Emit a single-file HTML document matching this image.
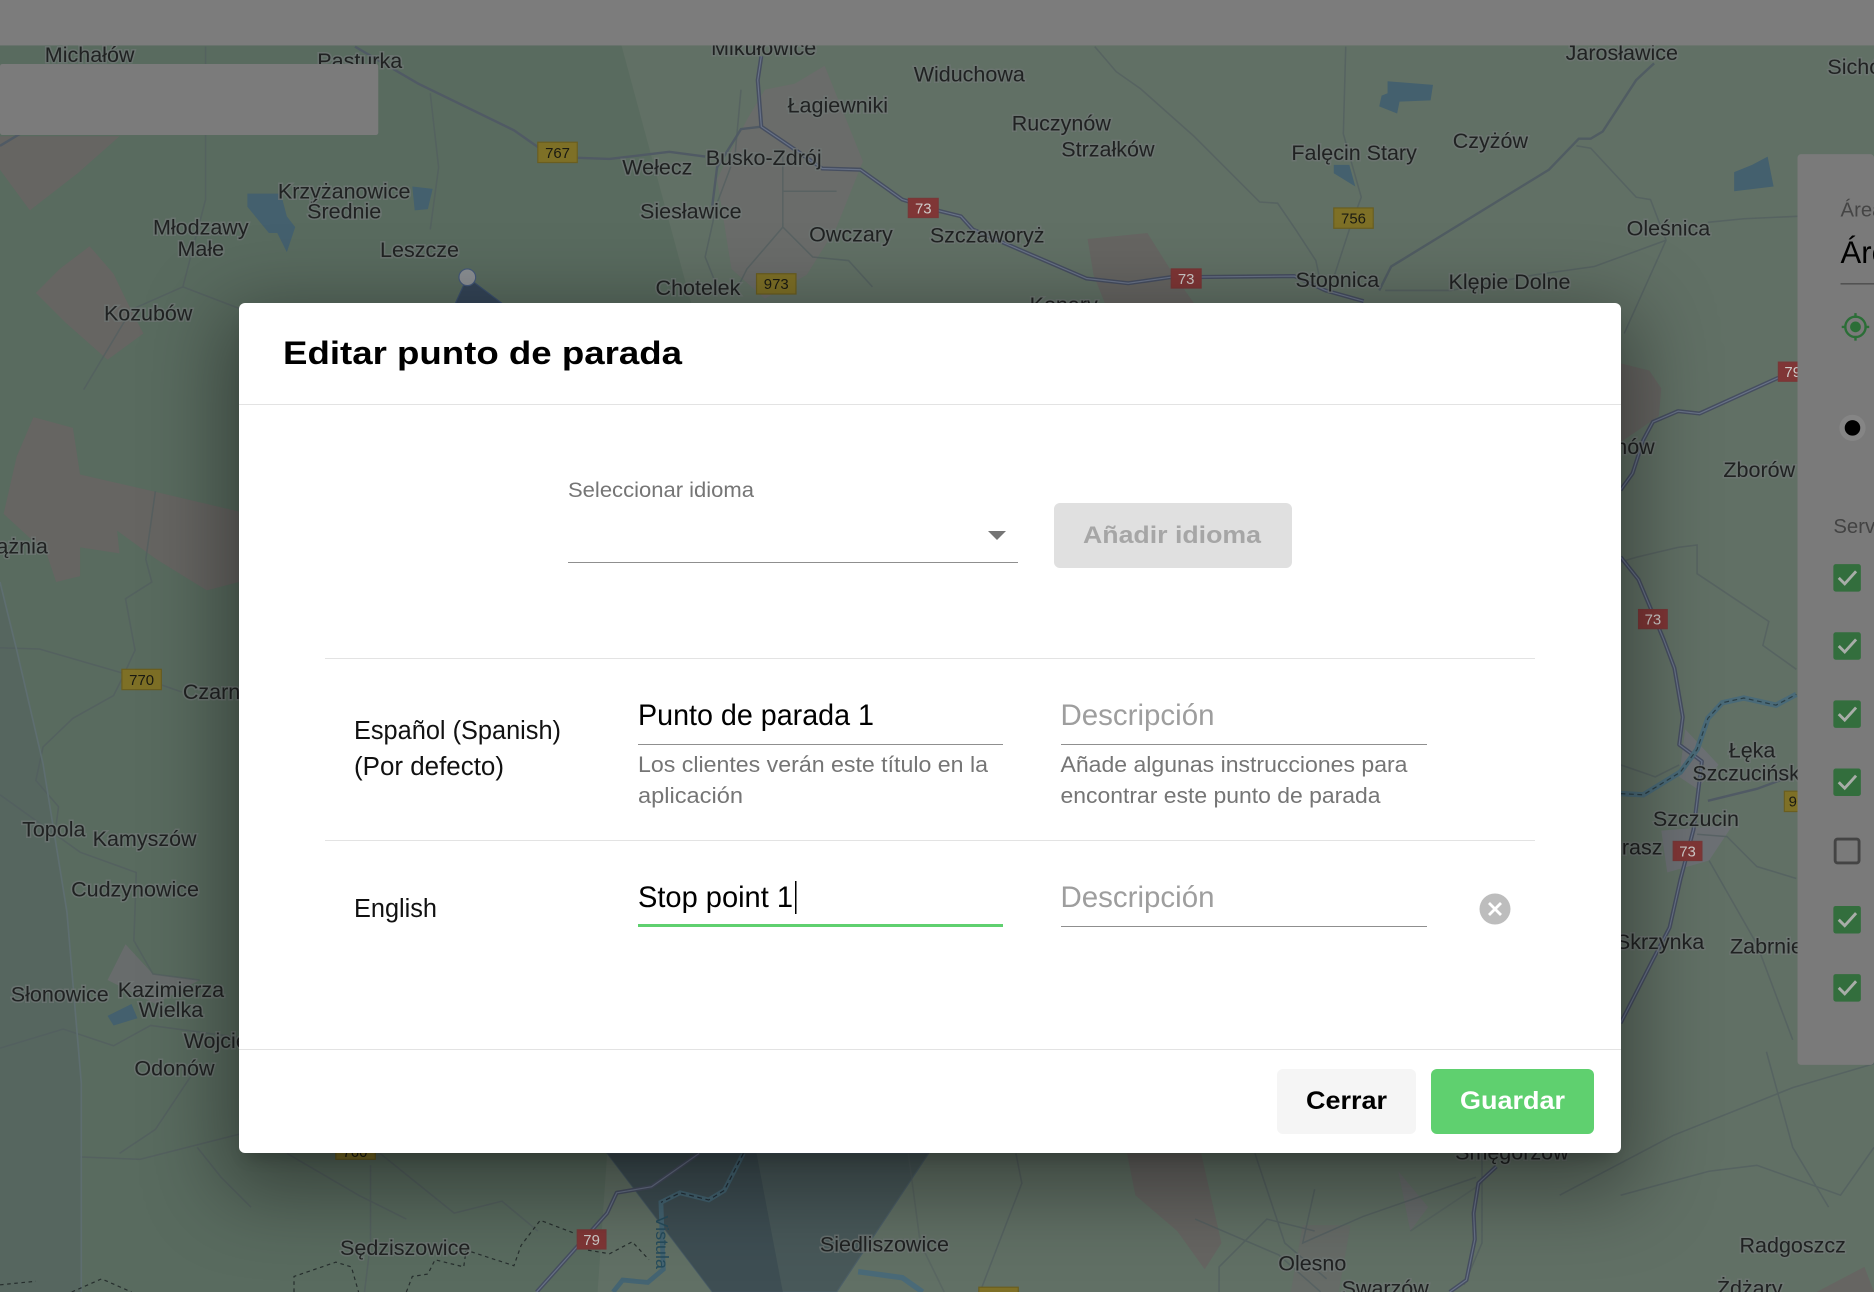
<!DOCTYPE html>
<html lang="es">
<head>
<meta charset="utf-8">
<title>Editar punto de parada</title>
<style>
html,body{margin:0;padding:0;width:1874px;height:1292px;overflow:hidden;background:#627068;font-family:"Liberation Sans",sans-serif}
#map{position:absolute;left:0;top:0;width:1874px;height:1292px}
#modal{position:absolute;left:239px;top:303px;width:1382px;height:850px;background:#fff;border-radius:6px;box-shadow:0 11px 15px -7px rgba(0,0,0,.2),0 24px 80px 16px rgba(0,0,0,.38)}
#modal svg{position:absolute;left:0;top:0;width:1382px;height:850px}
.l text{font-family:"Liberation Sans",sans-serif;font-size:18px;fill:#202222;stroke:#6f7674;stroke-width:2.6px;stroke-opacity:.75;paint-order:stroke;text-anchor:middle}
.s rect{stroke-width:1}
.s text{font-family:"Liberation Sans",sans-serif;font-size:12.5px;text-anchor:middle}
</style>
</head>
<body>
<svg id="map" viewBox="0 0 1568 1081" preserveAspectRatio="none" xmlns="http://www.w3.org/2000/svg">
<rect width="1568" height="1081" fill="#617065"/>
<!-- tinted coverage bands -->
<path d="M0 38H520L580 260V965H508L500 1081H0Z" fill="#586a5e" opacity=".8"/>
<path d="M0 487L14 544 36 639 56 763 68 906 68 1081H0Z" fill="#56665f"/>
<!-- urban / terrain patches -->
<g fill="#666562">
<path d="M0 114H100L65 145 25 176 0 142Z"/>
<path d="M75 206L50 225 30 245 55 270 90 301 120 279 105 250 95 229Z"/>
<path d="M28 349L61 358 67 397 128 411 200 428V487L173 494 131 468 98 444 100 463 67 458 67 482 47 487 39 463 3 430 14 382Z"/>
<path d="M625 100L640 75 665 70 690 55 712 110 722 135 700 190 675 230 640 250 612 225 600 150Z" fill="#6a6c6a"/>
<path d="M910 200L960 195 982 230 1000 255H925L915 230Z"/>
<path d="M1356 304L1380 310 1390 325 1388 348 1356 370Z"/>
<path d="M943 965H1005L1022 1040 1008 1062 985 1030 950 1000Z"/>
<path d="M1410 610L1438 640 1420 660 1405 650Z" fill="#6c7074"/>
<path d="M1390 695L1450 690 1430 720 1395 730Z" fill="#6c7074"/>
<path d="M1520 1081L1560 1060 1568 1081Z"/>
<path d="M105 790L128 815 167 820 130 840 90 820Z" fill="#686c6c"/>
<path d="M1090 1025H1130L1120 1081H1080Z" fill="#666b67"/>
<path d="M1170 980L1195 1010 1180 1030Z" fill="#686c6c"/>
</g>
<!-- water -->
<g fill="#44606e">
<path d="M207 162L235 162 240 181 247 190 240 211 232 195 225 195 207 173Z"/>
<path d="M345 156L362 158 358 175 347 176Z"/>
<path d="M1161 68L1199 71 1197 84 1171 85 1169 95 1154 89 1156 80 1161 78Z"/>
<path d="M1116 138L1129 138 1134 156 1116 145Z"/>
<path d="M1451 144L1466 138 1479 131 1484 156 1451 160Z"/>
<path d="M90 850L110 840 115 852 95 858Z"/>
</g>
<!-- coverage polygon -->
<path d="M508 965L596 1081H700L777 965Z" fill="#344650" opacity=".55" stroke="#3b5068" stroke-width="1"/>
<path d="M508 965L596 1081H655L633 965Z" fill="#283844" opacity=".3"/>
<path d="M391 232L380 256H423Z" fill="#344558" stroke="#3a4f6c"/>
<circle cx="391" cy="232" r="7" fill="#8c9094" stroke="#45597a"/>
<!-- thin roads -->
<g fill="none" stroke="#525e60" stroke-width="1.300" opacity=".7">
<path d="M172 39V167L153 240 110 259 70 326"/>
<path d="M153 240L200 258"/>
<path d="M360 78L367 140 360 192"/>
<path d="M1126 39L1124 112 1139 165 1129 192 1116 232"/>
<path d="M916 39L934 60 954 74 999 114 1054 169 1069 170 1084 192 1101 218 1104 232"/>
<path d="M1319 122L1331 124 1369 165 1381 167 1394 201 1359 279"/>
<path d="M1429 186L1459 183 1504 181"/>
<path d="M1394 201L1334 223 1284 230 1214 243 1159 243"/>
<path d="M0 542L33 543 102 563M135 573L152 579"/>
<path d="M130 411L122 468 127 487 105 501 113 544 102 568 95 582 61 601 36 625 30 653 49 675 47 690"/>
<path d="M0 665L67 713 114 730 112 787 128 815 167 820"/>
<path d="M0 877L53 861 95 875 126 858 200 868"/>
<path d="M67 968L117 970 200 949"/>
<path d="M160 900L130 945 100 965"/>
<path d="M165 960L185 985 210 1010"/>
<path d="M240 965L300 1000 340 1020"/>
<path d="M318 965L380 1015 420 1005 450 1030"/>
<path d="M310 975V1040L305 1081"/>
<path d="M620 75L615 130 600 170 590 215 600 240"/>
<path d="M655 130V190L680 215 710 218 730 240"/>
<path d="M655 190L625 225 615 245"/>
<path d="M655 160H700"/>
<path d="M1100 995L1090 1040 1140 1018 1235 985"/>
<path d="M1050 965L1075 1040 1110 1070"/>
<path d="M1000 1020L1070 1050 1105 1081"/>
<path d="M1020 1081L1020 1060 1060 1020 1100 1030"/>
<path d="M1356 1000L1430 980 1470 975 1540 1000 1568 960"/>
<path d="M1305 1000L1400 950 1500 910 1568 890"/>
<path d="M1478 880L1500 960 1530 1010"/>
<path d="M1356 640L1385 650 1405 640"/>
<path d="M1420 698L1445 700 1470 725 1503 735"/>
<path d="M1430 720L1470 790 1500 870"/>
<path d="M1356 470L1370 466 1404 458 1420 456 1420 480 1480 520 1475 540 1503 560"/>
<path d="M1240 965L1240 1040 1225 1075"/>
<path d="M760 965L770 1040 790 1081" opacity=".7"/>
<path d="M820 1081L855 990 850 965"/>
<path d="M1180 1030L1240 990" opacity=".6"/>
</g>
<path d="M0 487L14 544 36 639 56 763 68 906 68 1081" fill="none" stroke="#5e6e70" stroke-width="1.400"/>
<path d="M1384 53L1369 67 1341 110 1331 116 1321 116 1296 142 1164 223 1154 243" fill="none" stroke="#505c62" stroke-width="2"/>
<g fill="none" stroke="#505a64" stroke-width="2">
<path d="M297 39L350 70 430 109 450 123"/>
<path d="M483 132L510 133 560 127 590 131"/>
<path d="M0 122L20 110"/>
<path d="M1429 670L1470 660 1503 648"/>
<path d="M637 106L620 108 600 140 595 180"/>
</g>
<!-- main roads -->
<g fill="none" stroke="#464e60" stroke-width="3.400" stroke-linejoin="round">
<path id="r1" d="M637 47L634 67 637 106 665 125 688 141 720 142 755 167 784 176 804 181 814 192 844 205 909 233 944 237 979 232 1083 231 1109 243 1141 252"/>
<path id="r2" d="M1488 316L1422 346 1404 344 1383 353 1375 368 1366 396 1356 410"/>
<path id="r3" d="M1356 466L1371 485 1392 535 1401 559 1408 600 1405 623 1424 637 1417 694 1406 736 1397 776 1383 803 1356 856"/>
<path id="r4" d="M585 965L545 993 516 998 508 1015 449 1081"/>
<path id="r5" d="M1252 976L1237 990 1233 1015 1234 1037 1227 1071 1213 1081"/>
</g>
<g fill="none" stroke="#687288" stroke-width="1" stroke-linejoin="round">
<use href="#r1"/><use href="#r2"/><use href="#r3"/><use href="#r4"/><use href="#r5"/>
</g>
<path d="M1356 664L1375 665 1406 646 1420 627 1429 601 1441 588 1459 584 1486 590 1503 581" fill="none" stroke="#4a6a78" stroke-width="4.500"/>
<path d="M1356 664L1375 665 1406 646 1420 627 1429 601 1441 588 1459 584 1486 590 1503 581" fill="none" stroke="#2a3e46" stroke-width="1" stroke-dasharray="4 3"/>
<path d="M622 965L606 996 593 1004 569 998 553 1006 555 1062 542 1073 521 1071 513 1081" fill="none" stroke="#446472" stroke-width="4"/>
<path d="M622 965L606 996 593 1004 569 998 553 1006" fill="none" stroke="#222f38" stroke-width="1" stroke-dasharray="4 3"/>
<path d="M718 1064L755 1069 772 1081" fill="none" stroke="#4a6a78" stroke-width="4.500"/>
<!-- dashed borders -->
<g fill="none" stroke="#262e2d" stroke-width="1" stroke-dasharray="3 3">
<path d="M246 1081L246 1068 281 1056 294 1060 300 1081"/>
<path d="M340 1081L345 1068 358 1066 364 1054 388 1060 390 1046 430 1059 436 1042 452 1021 481 1032"/>
<path d="M492 1046L510 1049 529 1039 543 1054"/>
<path d="M0 1075L30 1072M60 1081L85 1070 110 1081"/>
</g>
<!-- shields -->
<g class="s">
<g fill="#7e7026" stroke="#6a5e20">
<rect x="450" y="119" width="33" height="17"/>
<rect x="633" y="229" width="33" height="17"/>
<rect x="1116" y="174" width="33" height="17"/>
<rect x="102" y="560" width="33" height="17"/>
<rect x="281" y="955" width="33" height="15"/>
<rect x="1493" y="662" width="30" height="17"/>
<rect x="819" y="1077" width="33" height="10"/>
</g>
<g fill="#1a1a12" stroke="none">
<text x="466.500" y="132">767</text><text x="649.500" y="242">973</text><text x="1132.500" y="187">756</text><text x="118.500" y="573">770</text><text x="297" y="968">760</text><text x="1500" y="675">9</text>
</g>
<g fill="#803636" stroke="#783838">
<rect x="760" y="166" width="25" height="16"/>
<rect x="980" y="225" width="25" height="16"/>
<rect x="1488" y="303" width="24" height="16"/>
<rect x="1371" y="510" width="24" height="16"/>
<rect x="1400" y="704" width="24" height="16"/>
<rect x="483" y="1029" width="24" height="16"/>
</g>
<g fill="#cfcbc9" stroke="none">
<text x="772.500" y="178.500">73</text><text x="992.500" y="237.500">73</text><text x="1500" y="315.500">79</text><text x="1383" y="522.500">73</text><text x="1412" y="716.500">73</text><text x="495" y="1041.500">79</text>
</g>
</g>
<!-- labels -->
<g class="l">
<text x="75" y="52">Michałów</text>
<text x="301" y="57">Pasturka</text>
<text x="639" y="46">Mikułowice</text>
<text x="811" y="68">Widuchowa</text>
<text x="701" y="94">Łagiewniki</text>
<text x="1357" y="50">Jarosławice</text>
<text x="1558" y="62">Sichów</text>
<text x="888" y="109">Ruczynów</text>
<text x="927" y="131">Strzałków</text>
<text x="1133" y="134">Falęcin Stary</text>
<text x="1247" y="124">Czyżów</text>
<text x="550" y="146">Wełecz</text>
<text x="639" y="138">Busko-Zdrój</text>
<text x="578" y="183">Siesławice</text>
<text x="712" y="202">Owczary</text>
<text x="826" y="203">Szczaworyż</text>
<text x="288" y="166">Krzyżanowice</text>
<text x="288" y="183">Średnie</text>
<text x="168" y="196">Młodzawy</text>
<text x="168" y="214">Małe</text>
<text x="351" y="215">Leszcze</text>
<text x="124" y="268">Kozubów</text>
<text x="584" y="247">Chotelek</text>
<text x="1119" y="240">Stopnica</text>
<text x="1263" y="242">Klępie Dolne</text>
<text x="1396" y="197">Oleśnica</text>
<text x="890" y="261">Konary</text>
<text x="1472" y="399">Zborów</text>
<text x="1357" y="380">Rynów</text>
<text x="10" y="463">Wążnia</text>
<text x="182" y="585">Czarna</text>
<text x="45" y="700">Topola</text>
<text x="121" y="708">Kamyszów</text>
<text x="113" y="750">Cudzynowice</text>
<text x="50" y="838">Słonowice</text>
<text x="143" y="834">Kazimierza</text>
<text x="143" y="851">Wielka</text>
<text x="190" y="877">Wojciech</text>
<text x="146" y="900">Odonów</text>
<text x="339" y="1050">Sędziszowice</text>
<text x="740" y="1047">Siedliszowice</text>
<text x="1098" y="1063">Olesno</text>
<text x="1159" y="1084">Swarzów</text>
<text x="1500" y="1048">Radgoszcz</text>
<text x="1464" y="1084">Żdżary</text>
<text x="1265" y="970">Smęgorzów</text>
<text x="1466" y="634">Łęka</text>
<text x="1466" y="653">Szczucińska</text>
<text x="1419" y="691">Szczucin</text>
<text x="1360" y="715">Olbrasz</text>
<text x="1389" y="794">Skrzynka</text>
<text x="1478" y="798">Zabrnie</text>
</g>
<text x="0" y="0" transform="translate(549 1017) rotate(90)" font-family="Liberation Sans" font-size="15" fill="#264c5c">Vistula</text>
<!-- page chrome under overlay -->
<rect x="0" y="0" width="1568" height="38" fill="#7c7c7c"/>
<rect x="0" y="53.500" width="316.500" height="59.500" rx="2" fill="#7b7b7b"/>
<rect x="1504" y="129" width="64" height="762" rx="3" fill="#7a7a7a"/>
<text x="1540" y="181" font-size="17" fill="#454545" font-family="Liberation Sans">Área</text>
<text x="1540" y="220" font-size="26" fill="#000" font-family="Liberation Sans">Área</text>
<rect x="1540" y="237" width="28" height="1" fill="#454545"/>
<g fill="none" stroke="#2b6e37" stroke-width="2">
<circle cx="1552.500" cy="273.500" r="8.500"/>
<path d="M1552.500 262V266M1552.500 281V285M1541 273.500H1545M1560 273.500H1564"/>
</g>
<circle cx="1552.500" cy="273.500" r="4.500" fill="#2b6e37"/>
<circle cx="1550" cy="358" r="11" fill="#858585"/>
<circle cx="1550" cy="358" r="6.500" fill="#000"/>
<text x="1534" y="446" font-size="17" fill="#434343" font-family="Liberation Sans">Servicios</text>
<g fill="#336e3d">
<rect x="1534" y="472" width="23" height="23" rx="2"/>
<rect x="1534" y="529" width="23" height="23" rx="2"/>
<rect x="1534" y="586" width="23" height="23" rx="2"/>
<rect x="1534" y="643" width="23" height="23" rx="2"/>
<rect x="1534" y="758" width="23" height="23" rx="2"/>
<rect x="1534" y="815" width="23" height="23" rx="2"/>
</g>
<rect x="1535.500" y="702" width="20" height="20" rx="2" fill="none" stroke="#444" stroke-width="2.400"/>
<g fill="none" stroke="#a8ada8" stroke-width="2.400">
<path d="M1538.500 483.500L1543.500 488.500 1553 478"/>
<path d="M1538.500 540.500L1543.500 545.500 1553 535"/>
<path d="M1538.500 597.500L1543.500 602.500 1553 592"/>
<path d="M1538.500 654.500L1543.500 659.500 1553 649"/>
<path d="M1538.500 769.500L1543.500 774.500 1553 764"/>
<path d="M1538.500 826.500L1543.500 831.500 1553 821"/>
</g>
</svg>

<div id="modal">
<svg viewBox="239 303 1382 850" xmlns="http://www.w3.org/2000/svg" font-family="'Liberation Sans',sans-serif">
<text x="283" y="364" font-size="32" font-weight="700" fill="#000" textLength="399" lengthAdjust="spacingAndGlyphs">Editar punto de parada</text>
<rect x="239" y="404" width="1382" height="1" fill="#e3e3e3"/>

<text x="568" y="497" font-size="21" fill="#757575" textLength="186" lengthAdjust="spacingAndGlyphs">Seleccionar idioma</text>
<rect x="568" y="562" width="450" height="1" fill="#8f8f8f"/>
<path d="M988 531H1006L997 540Z" fill="#757575"/>
<rect x="1054" y="503" width="238" height="65" rx="6" fill="#e0e0e0"/>
<text x="1083" y="543" font-size="24" font-weight="700" fill="#a6a6a6" textLength="178" lengthAdjust="spacingAndGlyphs">Añadir idioma</text>

<rect x="325" y="658" width="1210" height="1" fill="#e3e3e3"/>
<text x="354" y="739" font-size="25.500" fill="#111" textLength="207" lengthAdjust="spacingAndGlyphs">Español (Spanish)</text>
<text x="354" y="775" font-size="25.500" fill="#111" textLength="150" lengthAdjust="spacingAndGlyphs">(Por defecto)</text>
<text x="638" y="725" font-size="29.500" fill="#000" textLength="236" lengthAdjust="spacingAndGlyphs">Punto de parada 1</text>
<rect x="638" y="744" width="365" height="1" fill="#8f8f8f"/>
<text x="638" y="772" font-size="22" fill="#757575" textLength="350" lengthAdjust="spacingAndGlyphs">Los clientes verán este título en la</text>
<text x="638" y="803" font-size="22" fill="#757575" textLength="105" lengthAdjust="spacingAndGlyphs">aplicación</text>
<text x="1060.500" y="725" font-size="29.500" fill="#9e9e9e" textLength="154" lengthAdjust="spacingAndGlyphs">Descripción</text>
<rect x="1061" y="744" width="366" height="1" fill="#8f8f8f"/>
<text x="1060.500" y="772" font-size="22" fill="#757575" textLength="347" lengthAdjust="spacingAndGlyphs">Añade algunas instrucciones para</text>
<text x="1060.500" y="803" font-size="22" fill="#757575" textLength="320" lengthAdjust="spacingAndGlyphs">encontrar este punto de parada</text>

<rect x="325" y="840" width="1210" height="1" fill="#e3e3e3"/>
<text x="354" y="917" font-size="25.500" fill="#111" textLength="83" lengthAdjust="spacingAndGlyphs">English</text>
<text x="638" y="907" font-size="29.500" fill="#000" textLength="155" lengthAdjust="spacingAndGlyphs">Stop point 1</text>
<rect x="795" y="881" width="1.500" height="33" fill="#000"/>
<rect x="638" y="924" width="365" height="3" fill="#5fd06f"/>
<text x="1060.500" y="907" font-size="29.500" fill="#9e9e9e" textLength="154" lengthAdjust="spacingAndGlyphs">Descripción</text>
<rect x="1061" y="926" width="366" height="1" fill="#8f8f8f"/>
<circle cx="1495" cy="909" r="15.500" fill="#bdbdbd"/>
<path d="M1489 903L1501 915M1501 903L1489 915" stroke="#fff" stroke-width="2.800" fill="none"/>

<rect x="239" y="1049" width="1382" height="1" fill="#e3e3e3"/>
<rect x="1277" y="1069" width="139" height="65" rx="6" fill="#f5f5f5"/>
<text x="1306" y="1109" font-size="25" font-weight="700" fill="#000" textLength="81" lengthAdjust="spacingAndGlyphs">Cerrar</text>
<rect x="1431" y="1069" width="163" height="65" rx="6" fill="#5fd06f"/>
<text x="1460" y="1109" font-size="25" font-weight="700" fill="#fff" textLength="105" lengthAdjust="spacingAndGlyphs">Guardar</text>
</svg>
</div>
</body>
</html>
